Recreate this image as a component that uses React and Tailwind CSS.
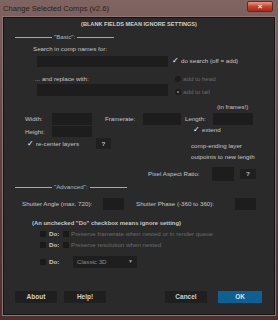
import React from 'react';

const font = { fontFamily: '"Liberation Sans", Arial, sans-serif' };

const Box = ({ className = '' }) => (
    <div className={`bg-[#1d1d1d] shrink-0 ${className}`} />
);

const Tick = () => (
    <span className="w-[7px] text-[8px] leading-[10px] font-bold text-white" style={{ fontFamily: '"DejaVu Sans", sans-serif' }}>✓</span>
);

const Unchecked = () => <div className="w-[6px] h-[6px] bg-[#1a1a1a]" />;

const Dashes = ({ label }) => (
    <div className="h-[10px] leading-[10px] ml-[11px] flex items-center gap-[2px] text-[#b5b5b5]">
        <div className="w-[37px] border-t border-[#a8a8a8]" />
        <span>"{label}":</span>
        <div className="w-[37px] border-t border-[#a8a8a8]" />
    </div>
);

const Btn = ({ label, className = '' }) => (
    <div className={`h-[12px] w-[42px] flex items-center justify-center text-[6.5px] font-bold ${className}`}>
        {label}
    </div>
);

export default function App() {
    return (
        <div
            className="w-[278px] h-[320px] flex flex-col bg-gradient-to-b from-[#806461] via-[#5f4240] to-[#4d2f2d] text-[#c6c6c6] text-[6.2px]"
            style={font}
        >
            {/* title bar */}
            <div className="h-[17px] flex items-start">
                <span className="ml-[3px] mt-[4px] text-[7.6px] leading-[10px] text-[#2a2020]">Change Selected Comps (v2.6)</span>
                <div className="ml-auto mr-[5px] mt-[1px] w-[26px] h-[11px] rounded-[2px] border border-[#5a2a24] bg-gradient-to-b from-[#e79a88] via-[#c4432f] to-[#a8291b] flex items-center justify-center text-white text-[8px] font-bold leading-none">
                    ×
                </div>
            </div>

            {/* panel */}
            <div className="ml-[3px] w-[272px] h-[298px] border border-[#141414] outline outline-[#8e7473] bg-[#2a2a2a] flex flex-col">
                <div className="mt-[1px] h-[10px] leading-[10px] text-center font-bold text-[5.6px] text-[#cfcfcf]">
                    (BLANK FIELDS MEAN IGNORE SETTINGS)
                </div>

                <div className="mt-[3px]"><Dashes label="Basic" /></div>

                {/* search / replace */}
                <div className="mt-[2px] flex">
                    <div className="ml-[29px] flex flex-col">
                        <div className="h-[10px] leading-[10px]">Search in comp names for:</div>
                        <Box className="mt-[2px] ml-[4px] w-[131px] h-[11px]" />
                        <div className="mt-[7px] ml-[2px] h-[10px] leading-[10px]">... and replace with:</div>
                        <Box className="ml-[4px] w-[131px] h-[12px]" />
                    </div>
                    <div className="ml-[4px] flex flex-col">
                        <div className="mt-[12px] h-[10px] flex items-center gap-[2px]">
                            <Tick />
                            <span>do search (off = add)</span>
                        </div>
                        <div className="mt-[8px] h-[10px] flex items-center gap-[2px] ml-[3px] text-[#6b6b6b]">
                            <div className="w-[6px] h-[6px] rounded-full bg-[#1c1c1c]" />
                            <span>add to head</span>
                        </div>
                        <div className="mt-[3px] h-[10px] flex items-center gap-[2px] ml-[3px] text-[#6b6b6b]">
                            <div className="w-[6px] h-[6px] rounded-full bg-[#1c1c1c] flex items-center justify-center">
                                <div className="w-[2px] h-[2px] rounded-full bg-[#8a8a8a]" />
                            </div>
                            <span>add to tail</span>
                        </div>
                    </div>
                </div>

                <div className="mt-[5px] h-[10px] leading-[10px] ml-[213px]">(in frames!)</div>

                {/* dimensions */}
                <div className="mt-[1px] flex">
                    <div className="ml-[21px] w-[67px] shrink-0 flex flex-col">
                        <div className="flex items-center h-[12px]">
                            <span className="w-[27px] shrink-0">Width:</span>
                            <Box className="w-[40px] h-[12px]" />
                        </div>
                        <div className="mt-[1px] flex items-center h-[11px]">
                            <span className="w-[27px] shrink-0">Height:</span>
                            <Box className="w-[40px] h-[11px]" />
                        </div>
                        <div className="mt-[1px] flex items-center h-[11px]">
                            <div className="ml-[2px] flex items-center gap-[2px] w-[69px] shrink-0">
                                <Tick />
                                <span>re-center layers</span>
                            </div>
                            <div className="w-[15px] h-[11px] shrink-0 bg-[#1f1f1f] flex items-center justify-center font-bold">?</div>
                        </div>
                    </div>
                    <div className="ml-[13px] flex items-center h-[12px]">
                        <span className="w-[38px] shrink-0">Framerate:</span>
                        <Box className="w-[38px] h-[12px]" />
                    </div>
                    <div className="ml-[4px] flex flex-col">
                        <div className="flex items-center h-[12px]">
                            <span className="w-[28px] shrink-0">Length:</span>
                            <Box className="w-[40px] h-[12px]" />
                        </div>
                        <div className="h-[10px] ml-[8px] flex items-center gap-[2px]">
                            <Tick />
                            <span>extend</span>
                        </div>
                        <div className="mt-[5px] ml-[6px] h-[11px] leading-[11px] whitespace-nowrap">comp-ending layer</div>
                        <div className="ml-[6px] h-[11px] leading-[11px] whitespace-nowrap">outpoints to new length</div>
                    </div>
                </div>

                {/* pixel aspect */}
                <div className="mt-[5px] h-[14px] flex items-center">
                    <span className="ml-[144px] w-[64px]">Pixel Aspect Ratio:</span>
                    <Box className="w-[22px] h-[14px]" />
                    <div className="ml-[6px] w-[16px] h-[10px] bg-[#1f1f1f] flex items-center justify-center font-bold">?</div>
                </div>

                <div className="mt-[1px]"><Dashes label="Advanced" /></div>

                {/* shutter */}
                <div className="mt-[6px] h-[12px] flex items-center">
                    <span className="ml-[18px] w-[81px]">Shutter Angle (max. 720):</span>
                    <Box className="w-[21px] h-[12px]" />
                    <span className="ml-[12px] w-[99px]">Shutter Phase (-360 to 360):</span>
                    <Box className="w-[21px] h-[12px]" />
                </div>

                <div className="mt-[8px] ml-[28px] h-[10px] leading-[10px] font-bold text-[5.9px]">
                    (An unchecked "Do" checkbox means ignore setting)
                </div>

                {/* do rows */}
                <div className="mt-[1px] h-[10px] flex items-center">
                    <div className="ml-[36px]"><Unchecked /></div>
                    <span className="ml-[3px] w-[14px] font-bold">Do:</span>
                    <Unchecked />
                    <span className="ml-[2px] text-[#6b6b6b]">Preserve framerate when nested or in render queue</span>
                </div>
                <div className="mt-[1px] h-[10px] flex items-center">
                    <div className="ml-[36px]"><Unchecked /></div>
                    <span className="ml-[3px] w-[14px] font-bold">Do:</span>
                    <Unchecked />
                    <span className="ml-[2px] text-[#6b6b6b]">Preserve resolution when nested</span>
                </div>
                <div className="mt-[6px] h-[12px] flex items-center">
                    <div className="ml-[36px]"><Unchecked /></div>
                    <span className="ml-[3px] w-[24px] font-bold">Do:</span>
                    <div className="w-[64px] h-[12px] bg-[#1e1e1e] flex items-center justify-between px-[4px] text-[#8c8c8c]">
                        <span>Classic 3D</span>
                        <span className="text-[5px] text-[#a0a0a0]">▼</span>
                    </div>
                </div>

                {/* buttons */}
                <div className="mt-[23px] h-[12px] flex items-center">
                    <Btn label="About" className="ml-[11px] bg-[#1f1f1f] text-[#d0d0d0]" />
                    <Btn label="Help!" className="ml-[7px] bg-[#1f1f1f] text-[#d0d0d0]" />
                    <Btn label="Cancel" className="ml-[59px] bg-[#1f1f1f] text-[#d0d0d0]" />
                    <Btn label="OK" className="ml-[11px] w-[44px] bg-[#0e5f92] text-[#d8e6ef]" />
                </div>
            </div>
        </div>
    );
}
